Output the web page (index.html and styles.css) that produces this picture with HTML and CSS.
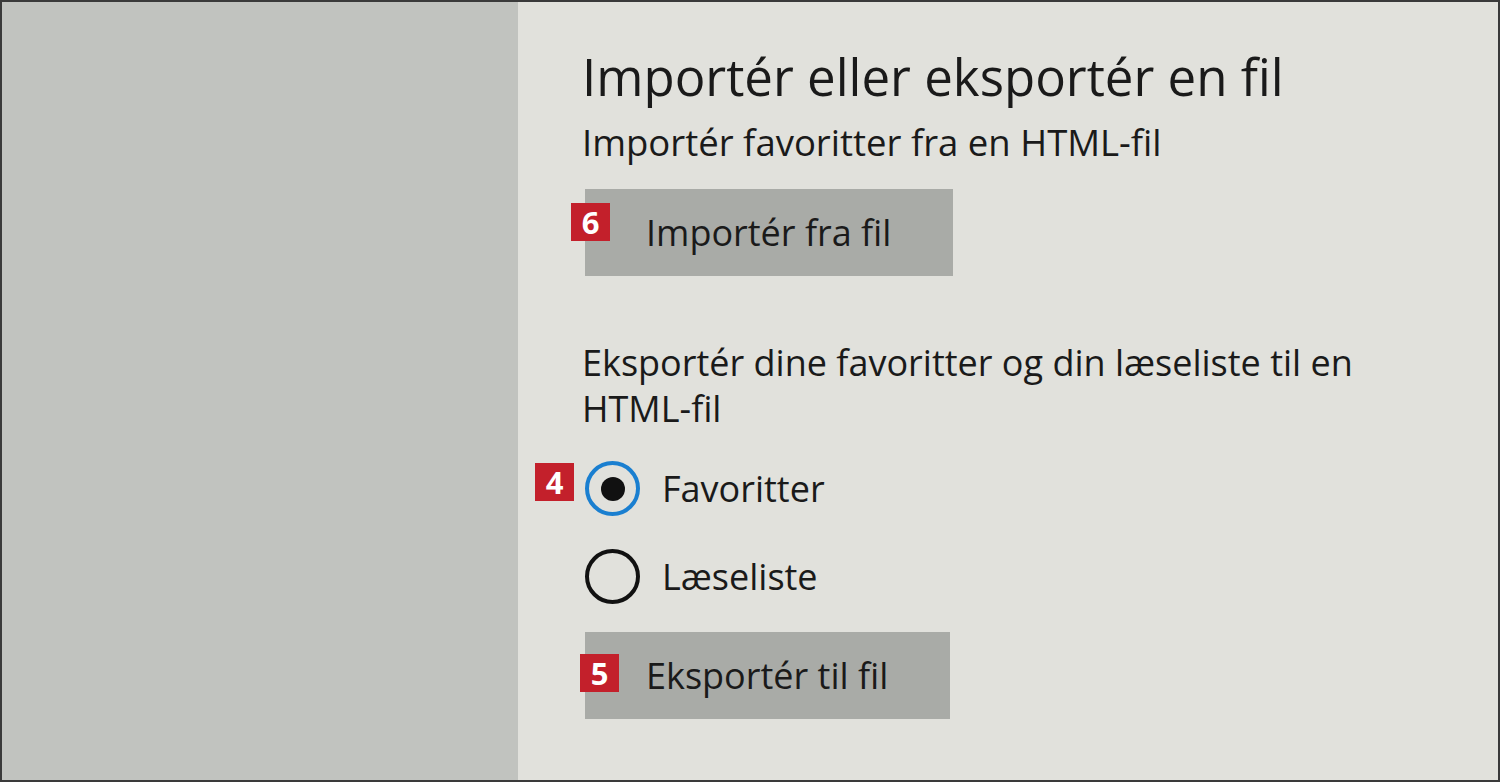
FILE: index.html
```html
<!DOCTYPE html>
<html lang="da">
<head>
<meta charset="utf-8">
<title>Importér eller eksportér en fil</title>
<link rel="stylesheet" href="styles.css">
</head>
<body>
<div class="frame">
  <aside class="sidebar"></aside>
  <main class="content">
    <h1 class="title">Importér eller eksportér en fil</h1>
    <p class="sub">Importér favoritter fra en HTML-fil</p>
    <button class="btn btn-import"><span class="badge badge-6">6</span>Importér fra fil</button>
    <p class="desc">Eksportér dine favoritter og din læseliste til en HTML-fil</p>
    <div class="radios">
      <div class="radio checked"><span class="badge badge-4">4</span><span class="circle"><span class="dot"></span></span><span class="label">Favoritter</span></div>
      <div class="radio"><span class="circle"></span><span class="label">Læseliste</span></div>
    </div>
    <button class="btn btn-export"><span class="badge badge-5">5</span>Eksportér til fil</button>
  </main>
</div>
</body>
</html>
```
FILE: styles.css
```css
* { box-sizing: border-box; }
html, body { margin: 0; padding: 0; }
body {
  width: 1500px;
  height: 782px;
  background: #2e2e2e;
  font-family: "Open Sans", "Noto Sans", sans-serif;
  color: #1a1a1a;
  overflow: hidden;
}
.frame {
  display: flex;
  width: 1500px;
  height: 782px;
  border: 2px solid #3a3a3a;
}
.sidebar {
  width: 516px;
  flex: none;
  background: #c1c3bf;
}
.content {
  flex: 1;
  background: #e1e1dc;
  padding: 40px 0 0 64px;
  display: flex;
  flex-direction: column;
  align-items: flex-start;
}
.title {
  margin: 0;
  font-size: 51px;
  font-weight: 400;
  line-height: 68px;
}
.sub {
  margin: 8px 0 0;
  font-size: 36.5px;
  line-height: 48px;
}
.btn {
  position: relative;
  display: block;
  margin: 23px 0 0 3px;
  border: none;
  background: #a9aba7;
  font-family: inherit;
  font-size: 36px;
  line-height: 36px;
  color: #1a1a1a;
  text-align: left;
  padding: 26px 0 25px 61px;
}
.btn-import { width: 368px; }
.btn-export { width: 365px; margin-top: 28px; }
.badge {
  position: absolute;
  width: 39px;
  height: 38px;
  background: #c3202b;
  color: #fff;
  font-weight: 700;
  font-size: 31px;
  line-height: 38px;
  text-align: center;
}
.badge-6 { left: -14px; top: 14px; }
.badge-5 { left: -5px; top: 22px; }
.badge-4 { left: -50px; top: 2px; }
.desc {
  margin: 64px 0 0;
  width: 800px;
  font-size: 36px;
  line-height: 46px;
}
.radios {
  margin: 29px 0 0 3px;
  display: flex;
  flex-direction: column;
  gap: 33px;
}
.radio {
  position: relative;
  display: flex;
  align-items: center;
  font-size: 36px;
  height: 55px;
}
.circle {
  width: 55px;
  height: 55px;
  border-radius: 50%;
  border: 4px solid #111;
  display: flex;
  align-items: center;
  justify-content: center;
  margin-right: 22px;
}
.checked .circle { border-color: #1a7fd0; }
.dot {
  width: 24px;
  height: 24px;
  border-radius: 50%;
  background: #111;
}
```
